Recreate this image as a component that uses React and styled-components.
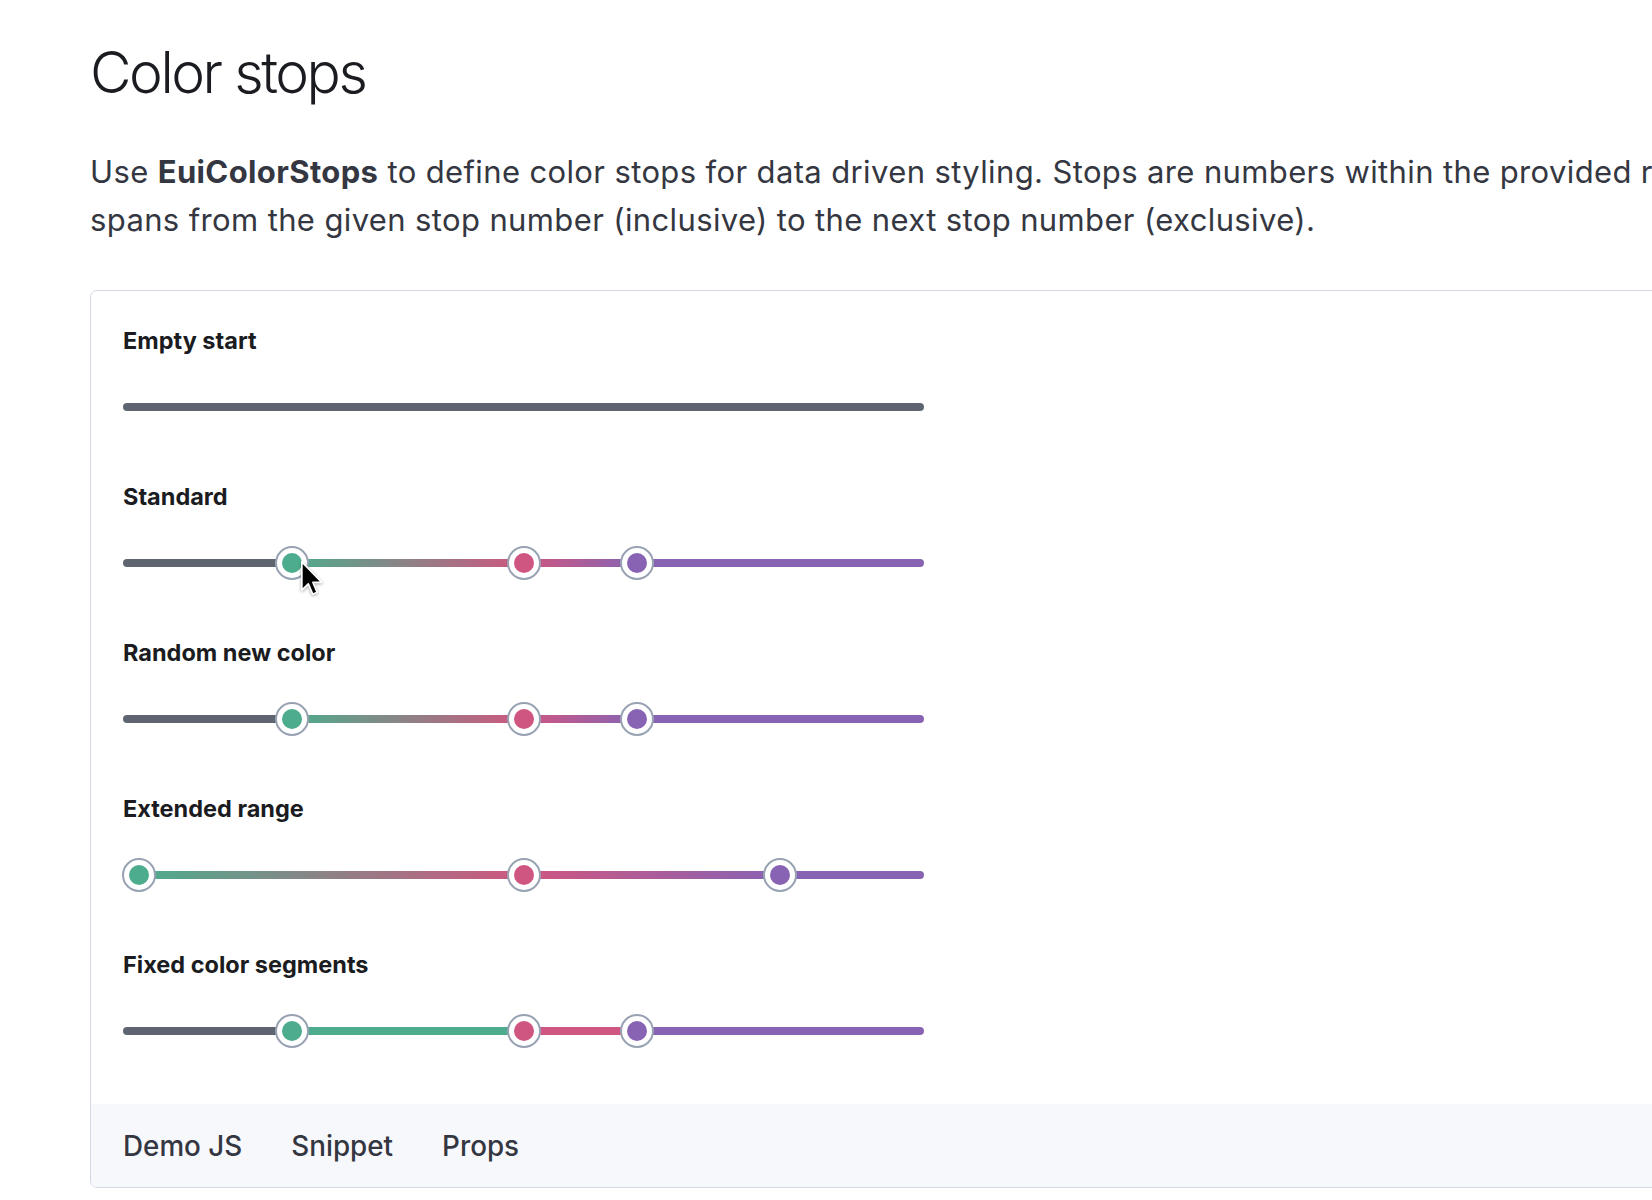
import React from "react";
import styled, { createGlobalStyle } from "styled-components";

const GREEN = "#4dac8d";
const RED = "#cf5680";
const PURPLE = "#8863b4";
const GRAY = "#5e6571";
const TRACK_WIDTH = 801;

const GlobalStyle = createGlobalStyle`
  html, body {
    margin: 0;
    padding: 0;
    background: #ffffff;
    overflow: hidden;
  }
  body {
    font-family: Inter, "Noto Sans", sans-serif;
    color: #343741;
  }
`;

const rows = [
  { label: "Empty start", stops: [], mode: "empty" },
  { label: "Standard", stops: [169, 401, 514], mode: "gradient", cursor: true },
  { label: "Random new color", stops: [169, 401, 514], mode: "gradient" },
  { label: "Extended range", stops: [16, 401, 657], mode: "gradient", fromStart: true },
  { label: "Fixed color segments", stops: [169, 401, 514], mode: "fixed" },
];

const colors = [GREEN, RED, PURPLE];

function trackBackground(row) {
  if (row.mode === "empty") return GRAY;
  const p = row.stops.map((s) => `${s}px`);
  if (row.mode === "fixed") {
    return `linear-gradient(to right, ${GRAY} 0 ${p[0]}, ${GREEN} ${p[0]} ${p[1]}, ${RED} ${p[1]} ${p[2]}, ${PURPLE} ${p[2]} 100%)`;
  }
  const start = row.fromStart ? `${GREEN} 0` : `${GRAY} 0 ${p[0]}`;
  return `linear-gradient(to right, ${start}, ${GREEN} ${p[0]}, ${RED} ${p[1]}, ${PURPLE} ${p[2]}, ${PURPLE} 100%)`;
}

// mouse pointer resting on the first thumb
function Cursor() {
  return (
    <CursorIcon width="24" height="37" viewBox="0 0 13 20">
      <path
        d="M1 1 L1 16.3 L4.5 12.9 L6.9 18.5 L9.3 17.5 L7 12.1 L11.8 12.1 Z"
        fill="#000"
        stroke="#fff"
        strokeWidth="0.9"
        strokeLinejoin="round"
      />
    </CursorIcon>
  );
}

function ColorStops({ row }) {
  return (
    <Slider>
      <Track $bg={trackBackground(row)} />
      {row.stops.map((s, i) => (
        <Thumb key={i} style={{ left: s }}>
          <Dot $color={colors[i]} />
        </Thumb>
      ))}
      {row.cursor && (
        <CursorWrap style={{ left: row.stops[0] + 8 }}>
          <Cursor />
        </CursorWrap>
      )}
    </Slider>
  );
}

export default function App() {
  return (
    <>
      <GlobalStyle />
      <Page>
        <Title>Color stops</Title>
        <Intro>
          Use <strong>EuiColorStops</strong> to define color stops for data driven
          styling. Stops are numbers within the provided range. The color segment
          spans from the given stop number (inclusive) to the next stop number
          (exclusive).
        </Intro>
        <Panel>
          <Demo>
            {rows.map((row) => (
              <Row key={row.label}>
                <Label>{row.label}</Label>
                <ColorStops row={row} />
              </Row>
            ))}
          </Demo>
          <Tabs>
            <Tab>Demo JS</Tab>
            <Tab>Snippet</Tab>
            <Tab>Props</Tab>
          </Tabs>
        </Panel>
      </Page>
    </>
  );
}

const Page = styled.div`
  width: 2200px;
  padding: 38px 0 0 90px;
`;

const Title = styled.h1`
  margin: 0;
  font-family: Inter, sans-serif;
  font-size: 57px;
  font-weight: 300;
  line-height: 70px;
  letter-spacing: -0.043em;
  color: #1a1c21;
`;

const Intro = styled.p`
  max-width: 2010px;
  margin: 40px 0 0;
  font-size: 31px;
  line-height: 47.5px;
  letter-spacing: 0.012em;
  color: #343741;

  strong {
    font-weight: 700;
    color: #343741;
  }
`;

const Panel = styled.div`
  margin-top: 47px;
  border: 1px solid #d3dae6;
  border-radius: 7px;
  overflow: hidden;
  background: #ffffff;
`;

const Demo = styled.div`
  display: flex;
  flex-direction: column;
  padding: 32px 32px 1px;
`;

const Row = styled.div`
  display: flex;
  flex-direction: column;
  gap: 31px;
  margin-bottom: 55px;
`;

const Label = styled.div`
  font-size: 23.5px;
  font-weight: 700;
  line-height: 36px;
  color: #1a1c21;
`;

const Slider = styled.div`
  position: relative;
  width: ${TRACK_WIDTH}px;
  height: 34px;
  display: flex;
  align-items: center;
`;

const Track = styled.div`
  width: 100%;
  height: 8px;
  border-radius: 4px;
  background: ${(p) => p.$bg};
`;

const Thumb = styled.div`
  position: absolute;
  top: 0;
  width: 34px;
  height: 34px;
  margin-left: -17px;
  box-sizing: border-box;
  border: 2px solid #98a2b3;
  border-radius: 50%;
  background: #ffffff;
  display: flex;
  align-items: center;
  justify-content: center;
`;

const Dot = styled.div`
  width: 20px;
  height: 20px;
  border-radius: 50%;
  background: ${(p) => p.$color};
`;

const CursorWrap = styled.div`
  position: absolute;
  top: 14px;
  pointer-events: none;
`;

const CursorIcon = styled.svg`
  display: block;
  filter: drop-shadow(0 1px 1.5px rgba(0, 0, 0, 0.35));
`;

const Tabs = styled.div`
  display: flex;
  align-items: center;
  gap: 49px;
  height: 83px;
  padding: 0 32px;
  background: #f7f8fc;
`;

const Tab = styled.div`
  font-size: 27.8px;
  font-weight: 500;
  color: #343741;
`;
